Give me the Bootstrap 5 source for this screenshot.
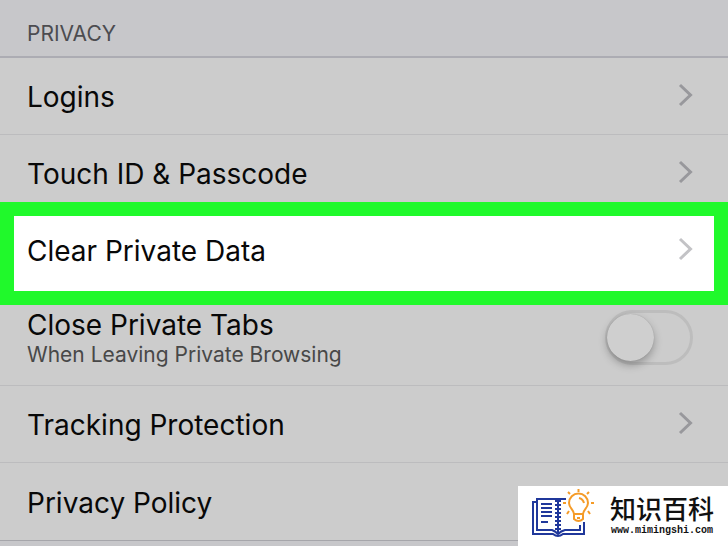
<!DOCTYPE html>
<html lang="en">
<head>
<meta charset="utf-8">
<meta name="viewport" content="width=device-width, initial-scale=1">
<title>Privacy settings</title>
<link href="https://cdn.jsdelivr.net/npm/bootstrap@5.3.0/dist/css/bootstrap.min.css" rel="stylesheet">
<style>
  body { background: #c7c7ca; color: #080808; font-family: Inter, "Noto Sans CJK SC", sans-serif; }
  .screen { min-height: 100vh; }
  .section-title { font-size: 21px; line-height: 24px; color: #4c4c50; padding: 22px 27px 10px; border-bottom: 2px solid #acacb3; }
  .setting { min-height: 77px; padding: 2px 35px 0 27px; background: #ccc; border-bottom: 1px solid #bcbcbe; color: inherit; font-size: 28px; line-height: 36px; }
  .setting:hover { color: inherit; }
  .chevron { width: 15px; height: 24px; margin-bottom: 4px; stroke: #98989c; stroke-width: 3; fill: none; }
  /* The highlighted row's frame overlaps its neighbours. */
  .highlighted { min-height: 103px; margin: -10px 0 -15px; padding: 0 21px 6px 13px; border: 14px solid #20f92b; background: #fff; z-index: 1; }
  .highlighted .chevron { stroke: #c3c3c6; }
  .with-note { min-height: 96px; padding-top: 17px; }
  .note { font-size: 21px; line-height: 24px; color: #484848; }
  .toggle.form-check-input { width: 88px; height: 55px; margin: 3px 0 0; padding: 0; border: 3px solid #bdbdbd; border-radius: 28px; background: #ccc; }
  .toggle.form-check-input::before { content: ""; display: block; width: 47px; height: 47px; margin: 1px 0 0 -1px; border-radius: 50%; background: #cfcfcf; box-shadow: 0 4px 9px rgba(0,0,0,.28), 0 0 1px rgba(0,0,0,.2); }
  .toggle.form-check-input:checked::before { margin-left: 35px; }
  .last { min-height: 78px; border-bottom-color: #a6a6ab; }
  .brand { right: 0; bottom: 0; z-index: 2; width: 210px; height: 60px; padding: 0 14px 4px 12px; background: #fff; color: #111; }
  .brand:hover { color: #111; }
  .brand svg { width: 66px; height: 52px; }
  .brand-name { font: 500 26px/34px "Noto Sans CJK SC", sans-serif; }
  .brand-site { font: bold 10px/12px "Liberation Mono", monospace; }
</style>
<script src="https://cdn.jsdelivr.net/npm/bootstrap@5.3.0/dist/js/bootstrap.bundle.min.js"></script>
</head>
<body>
<svg class="d-none" aria-hidden="true"><symbol id="chevron" viewBox="0 0 15 24"><path d="M2 2 12.500 12 2 22"/></symbol></svg>
<main class="screen position-relative">
  <h1 class="section-title fw-normal m-0">PRIVACY</h1>
  <nav class="d-flex flex-column" aria-label="Privacy">
    <a href="#" class="setting d-flex align-items-center justify-content-between text-decoration-none">Logins <svg class="chevron" aria-hidden="true"><use href="#chevron"/></svg></a>
    <a href="#" class="setting d-flex align-items-center justify-content-between text-decoration-none">Touch ID &amp; Passcode <svg class="chevron" aria-hidden="true"><use href="#chevron"/></svg></a>
    <a href="#" class="setting highlighted position-relative d-flex align-items-center justify-content-between text-decoration-none">Clear Private Data <svg class="chevron" aria-hidden="true"><use href="#chevron"/></svg></a>
    <div class="setting with-note d-flex align-items-start justify-content-between">
      <label for="close-tabs">Close Private Tabs<span class="note d-block">When Leaving Private Browsing</span></label>
      <input class="form-check-input toggle" type="checkbox" role="switch" id="close-tabs">
    </div>
    <a href="#" class="setting d-flex align-items-center justify-content-between text-decoration-none">Tracking Protection <svg class="chevron" aria-hidden="true"><use href="#chevron"/></svg></a>
    <a href="#" class="setting last d-flex align-items-center text-decoration-none">Privacy Policy</a>
  </nav>
  <a href="#" class="brand position-absolute d-flex align-items-center justify-content-between text-decoration-none">
    <svg viewBox="0 0 66 52" fill="none" aria-hidden="true">
      <g stroke="#20389b" stroke-width="2">
        <path d="M6 14H3V46H23Q28 50 33 46H54V34"/>
        <path d="M36 11H25Q23 11 21 11H7V42H22Q25 43 28 46Q31 43 35 42H50V37M28 12V45"/>
        <path d="M11 16H22M11 20H22M11 24H22M11 28H22M11 34H18"/>
        <path d="M25 13H31M25 17H31M25 21H31M25 25H31M25 29H31M25 33H31M25 37H31M25 41H31"/>
      </g>
      <g stroke="#f59b27" stroke-width="2">
        <path d="M44 26C44 22 39 20 39 15A9.500 9.500 0 0 1 58 15C58 20 53 22 53 26V31Q48.500 35 44 31ZM44 26H53M47 30H50M49 10Q53 11 54 15"/>
        <path d="M48.500 1V4M38 4 40 6M59 4 57 6M33 15H36M61 15H64M37 26 39 23M58 23 60 26"/>
      </g>
    </svg>
    <span class="text-center"><span class="brand-name d-block" lang="zh">知识百科</span><span class="brand-site d-block">www.mimingshi.com</span></span>
  </a>
</main>
</body>
</html>
